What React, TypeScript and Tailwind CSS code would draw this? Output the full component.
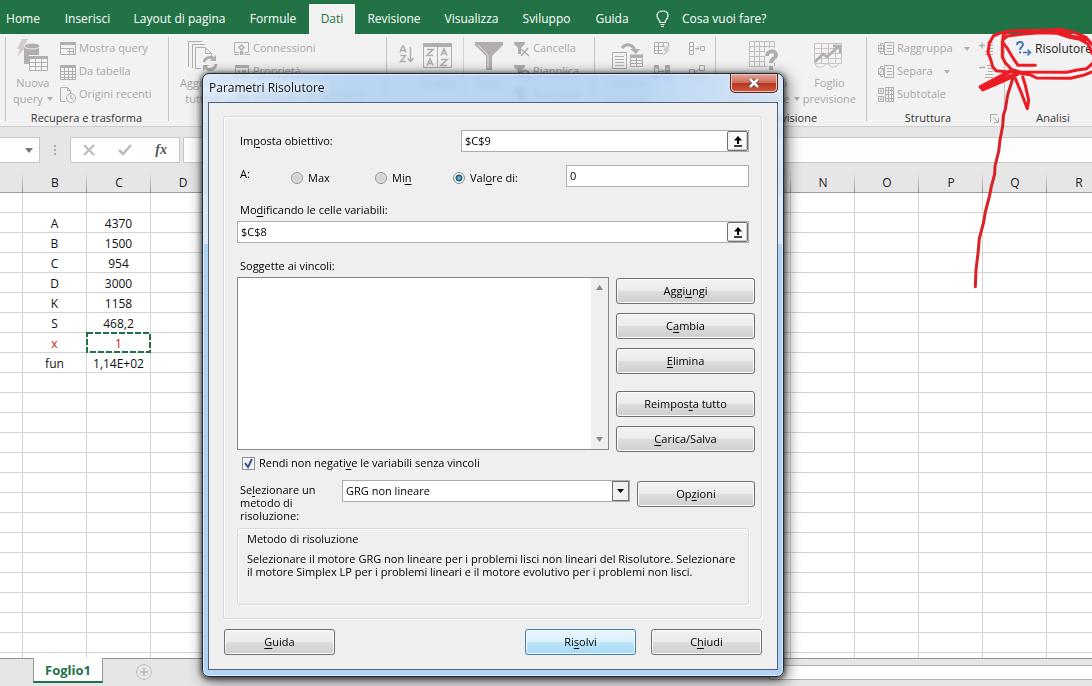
import { useState } from 'react'
import type { ReactNode } from 'react'
import clsx from 'clsx'

const tabs = [
  { label: 'Home', width: 'w-[60px]' },
  { label: 'Inserisci', width: 'w-[69px]' },
  { label: 'Layout di pagina', width: 'w-[115px]' },
  { label: 'Formule', width: 'w-[72px]' },
  { label: 'Dati', width: 'w-[46px]' },
  { label: 'Revisione', width: 'w-[78px]' },
  { label: 'Visualizza', width: 'w-[77px]' },
  { label: 'Sviluppo', width: 'w-[73px]' },
  { label: 'Guida', width: 'w-[58px]' },
]

const columns = ['A', 'B', 'C', 'D', 'E', 'F', 'G', 'H', 'I', 'J', 'K', 'L', 'M', 'N', 'O', 'P', 'Q', 'R']

const cells: Record<number, [string, string]> = {
  2: ['A', '4370'],
  3: ['B', '1500'],
  4: ['C', '954'],
  5: ['D', '3000'],
  6: ['K', '1158'],
  7: ['S', '468,2'],
  8: ['x', '1'],
  9: ['fun', '1,14E+02'],
}

const rows = Array.from({ length: 24 }, (_, i) => i + 1)

/* "Im&posta" underlines the letter after the ampersand */
function Mnemonic({ text }: { text: string }) {
  const i = text.indexOf('&')
  if (i < 0) return <>{text}</>
  return (
    <span>
      {text.slice(0, i)}
      <span className="underline underline-offset-2">{text[i + 1]}</span>
      {text.slice(i + 2)}
    </span>
  )
}

function Icon({ w = 16, h = 16, children }: { w?: number; h?: number; children: ReactNode }) {
  return (
    <svg width={w} height={h} viewBox={`0 0 ${w} ${h}`} fill="none" stroke="#b1aeae" className="shrink-0" aria-hidden="true">
      {children}
    </svg>
  )
}

const NewQueryIcon = () => (
  <Icon w={34} h={34}>
    <path d="M6 0h6L8 7h3L1 18l3-8H1z" fill="#cfcccc" stroke="none" />
    <path d="M8 7v18h5V16h10V7z" fill="#b1aeae" stroke="none" />
    <ellipse cx="16" cy="7" rx="8" ry="3" fill="#b1aeae" stroke="#f2f1f1" />
    <path d="M13.5 17.5h18v14h-18z" fill="#f8f7f7" />
    <path d="M13 18.500h19" strokeWidth="3" />
    <path d="M13.500 23.500h18M13.500 27.500h18M19.500 18v13M25.500 18v13" />
  </Icon>
)

const ShowQueryIcon = () => (
  <Icon>
    <path d="M.5 1.500h15v12H.5z" />
    <path d="M0 2.500h16" strokeWidth="3" />
    <path d="M.5 7.500h5M5.500 7.500h8v6M9.500 7v6M7 10.500h6" />
  </Icon>
)

const TableIcon = () => (
  <Icon>
    <path d="M.5 1.500h15v14H.5z" />
    <path d="M0 2.500h16" strokeWidth="3" />
    <path d="M0 7.500h16M0 10.500h16M0 13.500h16M4.500 3v12M8.500 3v12M12.500 3v12" />
  </Icon>
)

const RecentIcon = () => (
  <Icon>
    <path d="M6 14.500H.5v-14h7l3 3V7M7.500.5v3h3" />
    <circle cx="11" cy="11" r="4.500" />
    <path d="M11 8v3.500h2.500" />
  </Icon>
)

const RefreshIcon = () => (
  <Icon w={32} h={32}>
    <path d="M1.500 27V1.500H15M5.500 28V4.500H18M8.500 28.500v-21h10l6 6V17M18.500 7.500v6h6M8.500 28.500H14" />
    <path d="M17 22a6 6 0 0 1 10-3M29 24a6 6 0 0 1-10 4" strokeWidth="3" />
    <path d="M29 15v6h-6zM16 31v-6h6z" fill="#b1aeae" stroke="none" />
  </Icon>
)

const ConnectionIcon = () => (
  <Icon>
    <path d="M5 11.500H.5v-10h14v10H10M0 13.500h5M10 13.500h6" />
    <path d="M7.500 4l2.500 2.500L7.500 9 5 6.500z" strokeWidth="1.500" />
    <path d="M7.500 10v4" strokeWidth="3" />
  </Icon>
)

const PropertyIcon = () => (
  <Icon>
    <path d="M1.500 1.500h13v12h-13z" />
    <path d="M1 2.500h14" strokeWidth="3" />
    <path d="M4 7.500h2M8 7.500h4M4 10.500h2M8 10.500h4" strokeWidth="2" />
  </Icon>
)

const SortAscIcon = () => (
  <Icon w={16} h={20}>
    <path d="M1 7.500 3.500 1h1L7 7.500M2 5.500h4M1.500 10.500h5l-5 6h5.500" strokeWidth="1.500" />
    <path d="M11.500 2v14M8.500 13l3 3.500 3-3.500" strokeWidth="1.500" />
  </Icon>
)

const SortIcon = () => (
  <Icon w={30} h={26}>
    <path d="M.5 1.500h28v23H.5zM14.500 1v24" />
    <path d="M0 2h29" strokeWidth="4" />
    <path d="M4 6.500h6l-6 6h6M4 22.500 7 16l3 6.500M5 20.500h4M18 12.500 21 6l3 6.500M19 10.500h4M18 16.500h6l-6 6h6" strokeWidth="1.700" />
  </Icon>
)

const FunnelIcon = () => (
  <Icon w={28} h={28}>
    <path d="M0 0h28v3L17 14v14h-6V14L0 3z" fill="#b1aeae" stroke="none" />
    <path d="M3 3l10 10v13" stroke="#e4e2e2" />
  </Icon>
)

const ClearFilterIcon = () => (
  <Icon>
    <path d="M0 1h11v2L7 7v6H4V7L0 3z" fill="#b1aeae" stroke="none" />
    <path d="M7 8l8 7M14 7l-7 8" strokeWidth="1.500" />
  </Icon>
)

const ReapplyIcon = () => (
  <Icon>
    <path d="M0 1h11v2L7 7v6H4V7L0 3z" fill="#b1aeae" stroke="none" />
    <path d="M7 10a4 4 0 1 1 2 4" strokeWidth="2" />
  </Icon>
)

const TextColumnsIcon = () => (
  <Icon w={31} h={27}>
    <path d="M.5 9.500h14v16H.5zM3 13.500h9M3 16.500h9M3 19.500h9M3 22.500h9M18.500 14.500h12v9h-12zM18.500 17.500h12M18.500 20.500h12M24.500 14v10" />
    <path d="M18 13h13" strokeWidth="3" />
    <path d="M10 5c4-5 11-4 13 3" strokeWidth="3" />
    <path d="M18 6h10l-4 5z" fill="#b1aeae" stroke="none" />
  </Icon>
)

const FlashFillIcon = () => (
  <Icon>
    <path d="M9 12.500H.5v-11h14v4M0 5.500h11M0 9.500h8M4.500 1v12M9.500 1v5" />
    <path d="M12 5h4l-2 4h2l-7 6 2-5H9z" fill="#d0cdcd" stroke="none" />
  </Icon>
)

const DuplicatesIcon = () => (
  <Icon>
    <path d="M.5 1.500h4v13h-4zM11.500 1.500h4v13h-4zM5 7.500h5M8 5.500l2 2-2 2" />
    <path d="M0 3h5M0 10h5M11 3h5M11 7h5" strokeWidth="3" />
  </Icon>
)

const ConsolidateIcon = () => (
  <Icon>
    <path d="M.5 1.500h4v12h-4zM.5 5.500h4M.5 9.500h4M6 7.500h4M8 5.500l2 2-2 2M11.500 5.500h4v4h-4z" />
  </Icon>
)

const RelationIcon = () => (
  <Icon>
    <path d="M.5 5.500h5v7h-5zM10.500 1.500h5v5h-5zM10.500 10.500h5v4h-5zM3 11l7-6" />
  </Icon>
)

const WhatIfIcon = () => (
  <Icon w={30} h={30}>
    <path d="M.5.5h25v25H.5zM.5 5.500h25M.5 10.500h25M.5 15.500h16M.5 20.500h16M5.500.5v25M10.500.5v25M15.500.5v25M20.500.5v10" stroke="#c0bdbd" />
    <path d="M18 15c0-6 9-6 9-1 0 4-5 3-5 8M22 25v4" stroke="#f3f2f2" strokeWidth="7" />
    <path d="M18 15c0-6 9-6 9-1 0 4-5 3-5 8M22 25v4" strokeWidth="4" />
  </Icon>
)

const ForecastIcon = () => (
  <Icon w={30} h={26}>
    <path d="M.5.5h27v20H.5zM.5 5.500h27M.5 10.500h27M.5 15.500h27M7.500.5v20M14.500.5v20M21.500.5v20M1 21l2 3h6l3-3h3l2 3h5l2-3" stroke="#c7c4c4" />
    <path d="M1 19l8-8 4 3L25 3" strokeWidth="2.500" />
    <path d="M19 3h7v7" strokeWidth="2.500" />
  </Icon>
)

function OutlineIcon({ sign }: { sign: string }) {
  return (
    <Icon>
      <path d="M6.500 1.500h9v12h-9zM9 4.500h5M9 7.500h5M9 10.500h5M5 2.500H2.500V4M5 12.500H2.500V11M.5 4.500h5v6h-5z" />
      <path d={sign} />
    </Icon>
  )
}

const SubtotalIcon = () => (
  <Icon>
    <path d="M.5 1.500h5v5h-5zM.5 9.500h5v5h-5zM1.500 4h3M3 2.500v3M1.500 12h3M3 10.500v3" />
    <path d="M7.500.5h8v14h-8zM7 3.500h9M7 7.500h9M7 11.500h9M10.500 0v15M13.500 0v15" />
  </Icon>
)

function DetailIcon({ plus }: { plus?: boolean }) {
  return (
    <Icon>
      <path d={plus ? 'M0 4.500h6M3 1.500v6' : 'M0 3.500h6'} strokeWidth="1.500" />
      <path d="M8 1.500h6M9 4.500h5M9 7.500h5M6 10.500h8M6 13.500h8" />
    </Icon>
  )
}

function Caret() {
  return (
    <svg width="6" height="4" viewBox="0 0 6 4" className="shrink-0 fill-[#b1aeae]" aria-hidden="true">
      <path d="M0 0h6L3 4z" />
    </svg>
  )
}

function SmallCommand({ icon, label, caret }: { icon: ReactNode; label: string; caret?: boolean }) {
  return (
    <button type="button" className="flex h-[23px] items-center gap-[3px] whitespace-nowrap">
      {icon}
      {label}
      {caret && <span className="pl-2"><Caret /></span>}
    </button>
  )
}

function BigCommand({ icon, lines, caret }: { icon: ReactNode; lines: [string, string]; caret?: boolean }) {
  return (
    <button type="button" className="flex flex-col items-center leading-4 whitespace-nowrap">
      <span className="flex h-[38px] items-center">{icon}</span>
      <span>{lines[0]}</span>
      <span className="flex items-center gap-1">
        {lines[1]}
        {caret && <Caret />}
      </span>
    </button>
  )
}

function Group({ label, className, inner, launcher, children }: { label: string; className: string; inner: string; launcher?: boolean; children: ReactNode }) {
  return (
    <section
      aria-label={label}
      className={clsx('mt-[3px] flex shrink-0 flex-col bg-[linear-gradient(#c6c4c4,#c6c4c4)] bg-[length:1px_84px] bg-no-repeat', className)}
    >
      <div className={clsx('flex flex-1 items-start text-[#aaa7a7]', inner)}>{children}</div>
      <div className="flex h-4 items-center">
        <h2 className="flex-1 text-center text-[11px] text-[#333]">{label}</h2>
        {launcher && (
          <svg width="9" height="9" viewBox="0 0 9 9" fill="none" stroke="#aaa" className="mr-[5px] shrink-0" aria-hidden="true">
            <path d="M.5 8V.5H8M3 3l5 5M8.500 4v4.500H4" />
          </svg>
        )}
      </div>
    </section>
  )
}

function Ribbon() {
  return (
    <div className="flex h-[93px] shrink-0 overflow-hidden border-b border-[#cfcdcd] bg-[#f3f2f2] pl-[5px] text-[11px]">
      <Group label="Recupera e trasforma" className="w-[163px]" inner="pl-2">
        <div className="w-[47px]">
          <BigCommand icon={<NewQueryIcon />} lines={['Nuova', 'query']} caret />
        </div>
        <div>
          <SmallCommand icon={<ShowQueryIcon />} label="Mostra query" />
          <SmallCommand icon={<TableIcon />} label="Da tabella" />
          <SmallCommand icon={<RecentIcon />} label="Origini recenti" />
        </div>
      </Group>
      <Group label="Connessioni" className="w-[218px]" inner="pl-3">
        <div className="w-[54px]">
          <BigCommand icon={<RefreshIcon />} lines={['Aggiorna', 'tutto']} caret />
        </div>
        <div>
          <SmallCommand icon={<ConnectionIcon />} label="Connessioni" />
          <SmallCommand icon={<PropertyIcon />} label="Proprietà" />
          <SmallCommand icon={<ConnectionIcon />} label="Modifica collegamenti" />
        </div>
      </Group>
      <Group label="Ordina e filtra" className="w-[208px]" inner="pl-[13px]">
        <button type="button" aria-label="Ordina dalla A alla Z" className="pt-2"><SortAscIcon /></button>
        <div className="ml-2 flex h-16 w-[41px] border-r border-[#d5d3d3] pr-[10px]">
          <div className="flex w-[30px] justify-center">
            <BigCommand icon={<SortIcon />} lines={['Ordina', '']} />
          </div>
        </div>
        <div className="mx-[11px]">
          <BigCommand icon={<FunnelIcon />} lines={['Filtro', '']} />
        </div>
        <div>
          <SmallCommand icon={<ClearFilterIcon />} label="Cancella" />
          <SmallCommand icon={<ReapplyIcon />} label="Riapplica" />
          <SmallCommand icon={<ClearFilterIcon />} label="Avanzate" />
        </div>
      </Group>
      <Group label="Strumenti dati" className="w-[121px]" inner="gap-[11px] pl-[18px]">
        <div className="flex w-[31px] justify-center">
          <BigCommand icon={<TextColumnsIcon />} lines={['Testo in', 'colonne']} />
        </div>
        <div className="grid grid-cols-2 gap-x-[19px]">
          <SmallCommand icon={<FlashFillIcon />} label="" />
          <SmallCommand icon={<ConsolidateIcon />} label="" />
          <SmallCommand icon={<DuplicatesIcon />} label="" />
          <SmallCommand icon={<RelationIcon />} label="" />
        </div>
      </Group>
      <Group label="Previsione" className="w-[151px]" inner="justify-end gap-[3px] pr-[10px]">
        <BigCommand icon={<WhatIfIcon />} lines={['Analisi di', 'simulazione']} caret />
        <BigCommand icon={<ForecastIcon />} lines={['Foglio', 'previsione']} />
      </Group>
      <Group label="Struttura" className="w-[138px]" inner="pl-3" launcher>
        <div className="w-[101px]">
          <SmallCommand icon={<OutlineIcon sign="M1 7.500h4M3 5.500v4" />} label="Raggruppa" caret />
          <SmallCommand icon={<OutlineIcon sign="M1 10l4-5" />} label="Separa" caret />
          <SmallCommand icon={<SubtotalIcon />} label="Subtotale" />
        </div>
        <div>
          <SmallCommand icon={<DetailIcon plus />} label="" />
          <SmallCommand icon={<DetailIcon />} label="" />
        </div>
      </Group>
      <Group label="Analisi" className="min-w-[98px]" inner="pl-3">
        <button type="button" className="flex h-[23px] items-center gap-[3px] text-xs text-[#222]">
          <svg width="16" height="16" viewBox="0 0 16 16" fill="none" stroke="#4678b2" strokeWidth="2" aria-hidden="true">
            <path d="M1 4c0-4 6-4 6-.5C7 6 4 6 4 9M4 10.500v2" />
            <path d="M7 11.500h7M11.500 8.500l3 3-3 3" strokeWidth="1.500" />
          </svg>
          Risolutore
        </button>
      </Group>
    </div>
  )
}

function FormulaBar() {
  return (
    <div className="flex h-9 shrink-0 items-end bg-[#e6e6e6]">
      <div className="flex h-[26px] w-10 items-center justify-end border border-l-0 border-[#c6c6c6] bg-white pr-1.5">
        <svg width="8" height="5" viewBox="0 0 8 5" className="fill-[#777]" aria-hidden="true"><path d="M0 0h8L4 5z" /></svg>
      </div>
      <svg width="30" height="26" viewBox="0 0 30 26" className="fill-[#aaa]" aria-hidden="true">
        <path d="M14 8h2v2h-2zM14 12h2v2h-2zM14 16h2v2h-2z" />
      </svg>
      <div className="flex h-[26px] w-[110px] items-center justify-between border border-[#c6c6c6] bg-white px-3">
        <button type="button" aria-label="Annulla">
          <svg width="12" height="12" viewBox="0 0 12 12" stroke="#bbb" strokeWidth="2"><path d="M1 1l10 10M11 1L1 11" /></svg>
        </button>
        <button type="button" aria-label="Invio">
          <svg width="14" height="12" viewBox="0 0 14 12" fill="none" stroke="#bbb" strokeWidth="2.500"><path d="M1 6l4 4 8-9" /></svg>
        </button>
        <button type="button" aria-label="Inserisci funzione" className="font-['Liberation_Serif',serif] text-sm font-bold text-[#555] italic">
          fx
        </button>
      </div>
      <input aria-label="Barra della formula" className="ml-[3px] h-[26px] min-w-0 flex-1 border border-r-0 border-[#c6c6c6] bg-[#fdfdfd] px-2 text-xs outline-none" />
    </div>
  )
}

function Sheet() {
  return (
    <div className="min-h-0 flex-1 overflow-hidden bg-white">
      <table className="w-[1111px] table-fixed border-separate border-spacing-0 text-center text-xs leading-4 text-[#111]">
        <colgroup>
          {columns.map((c) => <col key={c} className={c === 'A' ? 'w-[23px]' : 'w-16'} />)}
        </colgroup>
        <thead>
          <tr className="h-[30px]">
            {columns.map((c) => (
              <th
                key={c}
                scope="col"
                className="border-b border-[#9b9b9b] bg-[#e6e6e6] bg-[linear-gradient(#e6e6e6,#999)] bg-[length:1px_20px] bg-right-bottom bg-no-repeat p-0 pt-[10px] font-normal text-[#222]"
              >
                {c === 'A' ? '' : c}
              </th>
            ))}
          </tr>
        </thead>
        <tbody>
          {rows.map((r) => (
            <tr key={r} className={clsx('h-5', r === 8 && 'text-[#c22]')}>
              {columns.map((c) => (
                <td key={c} className="relative border-r border-b border-[#d4d4d4] p-0 pt-0.5">
                  {c === 'B' && cells[r]?.[0]}
                  {c === 'C' && cells[r]?.[1]}
                  {c === 'C' && r === 8 && (
                    <svg className="absolute -top-px -left-px" width="65" height="21" fill="none" stroke="#217346" strokeWidth="2" strokeDasharray="6 2" aria-hidden="true">
                      <rect x="1" y="1" width="63" height="19" />
                    </svg>
                  )}
                </td>
              ))}
            </tr>
          ))}
        </tbody>
      </table>
    </div>
  )
}

function SheetTabs() {
  return (
    <div className="flex h-7 shrink-0 items-start border-t border-[#979797] bg-[#e6e6e6] pl-[33px]">
      <button type="button" className="-mt-px flex h-[25px] w-[70px] items-center justify-center border-x border-b-2 border-x-[#979797] border-b-[#217346] bg-white pt-0.5 text-[13px] font-bold text-[#217346]">
        Foglio1
      </button>
      <button type="button" aria-label="Nuovo foglio" className="mt-1 ml-8">
        <svg width="18" height="18" viewBox="0 0 18 18" fill="none" stroke="#c0c0c0">
          <circle cx="9" cy="9" r="7.500" />
          <path d="M9 5v8M5 9h8" strokeWidth="2" />
        </svg>
      </button>
      <div className="mt-1.5 ml-auto h-[15px] w-[323px] border-y border-l border-[#b0b0b0] bg-white" />
    </div>
  )
}

function DialogButton({ text, primary, className }: { text: string; primary?: boolean; className: string }) {
  return (
    <button
      type="button"
      className={clsx(
        'h-[26px] rounded-[3px] border text-[11px] shadow-[inset_0_0_0_1px_#fbfbfb]',
        primary
          ? 'border-[#3c7fb1] bg-[linear-gradient(#eaf6fd,#d9f0fc_50%,#bee6fd_50%,#a7d9f5)]'
          : 'border-[#707070] bg-[linear-gradient(#f2f2f2,#ebebeb_50%,#dddddd_50%,#cfcfcf)]',
        className,
      )}
    >
      <Mnemonic text={text} />
    </button>
  )
}

function RefField({ id, value, className }: { id: string; value: string; className: string }) {
  return (
    <div className={clsx('flex h-[22px] border border-[#abadb3] bg-white', className)}>
      <input id={id} defaultValue={value} className="min-w-0 flex-1 px-[3px] outline-none" />
      <button type="button" aria-label="Comprimi finestra di dialogo" className="flex w-[21px] items-center justify-center rounded-[2px] border border-[#707070] bg-[#f8f8f8] shadow-[inset_-1px_-1px_0_#ccc]">
        <svg width="10" height="11" viewBox="0 0 10 11" stroke="#000" fill="none" aria-hidden="true">
          <path d="M5 8V2" strokeWidth="2" />
          <path d="M5 0l4 4.500H1z" fill="#000" stroke="none" />
          <path d="M1 10h8" strokeWidth="1.500" />
        </svg>
      </button>
    </div>
  )
}

const goals = [
  { id: 'max', label: 'Max', width: 'w-[84px]' },
  { id: 'min', label: 'Mi&n', width: 'w-[78px]' },
  { id: 'value', label: 'Val&ore di:', width: 'w-[113px]' },
]

function SolverDialog() {
  const [goal, setGoal] = useState('value')

  return (
    <div
      role="dialog"
      aria-labelledby="solver-title"
      className="absolute top-[73px] left-[202px] w-[582px] rounded-[7px] border border-[#1f2b38] bg-[linear-gradient(transparent_170px,#b2d2f4_170px),linear-gradient(90deg,#d3e4f7cc,#aacdf2cc_25%,#aacdf2cc_75%,#d3e4f7cc)] px-[5px] pb-1.5 text-[11px] leading-4 text-black shadow-[inset_0_0_0_1px_#dcecfc,0_1px_5px_1px_rgba(0,0,0,0.6),2px_3px_14px_2px_rgba(0,0,0,0.5)] backdrop-blur-[2px]"
    >
      <div className="flex h-7 items-start justify-between">
        <h1 id="solver-title" className="pt-1.5 pl-px text-xs leading-4 text-[#111] [text-shadow:0_0_8px_#fff,0_0_8px_#fff]">
          Parametri Risolutore
        </h1>
        <button
          type="button"
          aria-label="Chiudi finestra"
          className="flex h-[19px] w-12 items-center justify-center rounded-b-[5px] border border-t-0 border-[#5c2320] bg-[linear-gradient(#e3a99c,#cf6c5a_48%,#b43420_50%,#cf5a3c)] shadow-[inset_0_0_0_1px_#eec4bb]"
        >
          <svg width="12" height="10" viewBox="0 0 12 10" aria-hidden="true">
            <path d="M2 1l8 8M10 1L2 9" stroke="#5b3a3a" strokeWidth="4" />
            <path d="M2 1l8 8M10 1L2 9" stroke="#fff" strokeWidth="2.500" />
          </svg>
        </button>
      </div>

      <div className="border border-[#52657a] bg-[#efefef] pt-[13px] pr-[15px] pb-[14px] pl-[14px]">
        <div className="rounded-[3px] border border-[#d5dbe0] py-[13px] pr-1.5 pl-[13px] shadow-[inset_1px_1px_0_#fff,1px_1px_0_#fff]">
          <div className="flex items-center justify-between pr-1.5 pl-[3px]">
            <label htmlFor="objective"><Mnemonic text="Im&posta obiettivo:" /></label>
            <RefField id="objective" value="$C$9" className="w-[288px]" />
          </div>

          <div className="mt-[13px] flex items-center pr-1.5 pl-[3px]">
            <span className="w-[51px] pb-1">A:</span>
            {goals.map((g) => (
              <label key={g.id} className={clsx('flex items-center gap-[5px] pt-1', g.width)}>
                <input
                  type="radio"
                  name="goal"
                  checked={goal === g.id}
                  onChange={() => setGoal(g.id)}
                  className="size-3 appearance-none rounded-full border border-[#8e8f8f] bg-[radial-gradient(#d2d2d2_35%,#f6f6f6)] checked:bg-[radial-gradient(#7fd0ee_5%,#17506f_42%,#f4f4f4_55%)]"
                />
                <Mnemonic text={g.label} />
              </label>
            ))}
            <input aria-label="Valore di" defaultValue="0" className="h-[22px] min-w-0 flex-1 border border-[#abadb3] bg-white px-[3px] pb-0.5 outline-none" />
          </div>

          <div className="mt-[15px] flex flex-col gap-[3px] pr-1.5">
            <label htmlFor="variables" className="pl-[3px]"><Mnemonic text="Mo&dificando le celle variabili:" /></label>
            <RefField id="variables" value="$C$8" className="w-full" />
          </div>

          <label htmlFor="constraints" className="mt-[15px] block pl-[3px]">Soggette ai vincoli:</label>
          <div className="mt-[3px] flex items-start gap-[7px]">
            <div className="flex h-[173px] flex-1 border border-[#828790] bg-white">
              <select id="constraints" multiple className="min-w-0 flex-1 appearance-none outline-none" />
              <div className="flex w-[17px] flex-col items-center justify-between bg-[#efefef] py-[7px]" aria-hidden="true">
                <svg width="7" height="5" viewBox="0 0 7 5" className="fill-[#8a8a8a]"><path d="M3.500 0L7 5H0z" /></svg>
                <svg width="7" height="5" viewBox="0 0 7 5" className="fill-[#8a8a8a]"><path d="M0 0h7L3.500 5z" /></svg>
              </div>
            </div>
            <div className="flex w-[139px] flex-col gap-[9px] pt-px">
              <DialogButton text="Aggi&ungi" className="w-full" />
              <DialogButton text="C&ambia" className="w-full" />
              <DialogButton text="&Elimina" className="mb-2 w-full" />
              <DialogButton text="Reimpos&ta tutto" className="w-full" />
              <DialogButton text="&Carica/Salva" className="w-full" />
            </div>
          </div>

          <label className="mt-[3px] flex items-center gap-1 pl-[5px]">
            <span className="relative flex">
              <input type="checkbox" defaultChecked className="peer size-[13px] appearance-none border border-[#8e8f8f] bg-[#eef0f4] shadow-[inset_0_0_0_1px_#fff]" />
              <svg className="pointer-events-none absolute inset-0 hidden peer-checked:block" width="13" height="13" viewBox="0 0 13 13" fill="none" stroke="#3f5390" strokeWidth="2" aria-hidden="true">
                <path d="M3 6l3 4 4-8" />
              </svg>
            </span>
            <Mnemonic text="Rendi non negati&ve le variabili senza vincoli" />
          </label>

          <div className="mt-[9px] flex items-start">
            <label htmlFor="method" className="w-[105px] pt-[3px] pr-3 pl-[3px] leading-[13px]">
              <Mnemonic text="Se&lezionare un metodo di risoluzione:" />
            </label>
            <div className="relative flex-1">
              <select id="method" className="block h-[22px] w-full appearance-none border border-[#abadb3] bg-white px-[3px] outline-none">
                <option>GRG non lineare</option>
                <option>Simplex LP</option>
                <option>Evolutivo</option>
              </select>
              <span className="pointer-events-none absolute top-px right-px flex h-5 w-[17px] items-center justify-center border border-[#707070] bg-[#f0f0f0]" aria-hidden="true">
                <svg width="7" height="4" viewBox="0 0 7 4"><path d="M0 0h7L3.500 4z" /></svg>
              </span>
            </div>
            <DialogButton text="Op&zioni" className="mt-px ml-[7px] w-[118px]" />
          </div>

          <section className="mt-1.5 mr-1.5 h-[77px] rounded-[3px] border border-[#d5dbe0] px-[9px] pt-0.5 shadow-[inset_1px_1px_0_#fff,1px_1px_0_#fff]">
            <h2>Metodo di risoluzione</h2>
            <p className="mt-[5px] leading-[13px]">
              Selezionare il motore GRG non lineare per i problemi lisci non lineari del Risolutore. Selezionare
              <br />
              il motore Simplex LP per i problemi lineari e il motore evolutivo per i problemi non lisci.
            </p>
          </section>
        </div>

        <div className="mt-[10px] flex gap-[15px] pl-px">
          <DialogButton text="&Guida" className="mr-auto w-[111px]" />
          <DialogButton text="Ri&solvi" primary className="w-[111px]" />
          <DialogButton text="C&hiudi" className="w-[111px]" />
        </div>
      </div>
    </div>
  )
}

/* hand-drawn marker round the Risolutore command */
function Marker() {
  return (
    <svg
      className="pointer-events-none absolute top-5 left-[940px]"
      width="152"
      height="280"
      viewBox="0 0 456 840"
      fill="none"
      stroke="#ed1c24"
      strokeWidth="9"
      strokeLinecap="round"
      strokeLinejoin="round"
      aria-hidden="true"
    >
      <path d="M205 156L168 152L158 140L152 118L144 98L148 70L160 48L184 38L228 32L300 31L360 28L405 38L438 52L458 76" />
      <path d="M205 32L190 46L187 66L200 82L214 106L234 136L286 136" />
      <path d="M187 66L187 112L196 128L214 148L240 156L380 157L412 150L440 146L460 128" />
      <path d="M190 58L202 48L250 42L300 38L352 40L388 52L420 58L444 72L456 100" />
      <path d="M350 34L396 50L436 58" strokeWidth="12" />
      <path d="M240 160L270 164L290 174L392 175L430 166L460 154" />
      <path d="M122 201L214 152L232 162L180 186L128 208L150 194L212 168" strokeWidth="12" />
      <path d="M226 176L242 214L262 266L266 240L256 196L248 170" />
      <path d="M222 160L214 190L203 224L196 268L190 286L188 318L180 360L176 394L165 438L164 462L154 500L148 530L136 576L131 606L118 656L114 700L108 750L106 800" stroke="#d9212a" />
    </svg>
  )
}

export default function App() {
  return (
    <div className="relative flex h-screen flex-col overflow-hidden bg-[#e6e6e6] font-['Open_Sans','Noto_Sans',sans-serif]">
      <nav className="flex h-[34px] shrink-0 items-end bg-[#217346] text-xs text-white">
        <div className="-ml-[7px] flex shrink-0 items-end">
          {tabs.map((t) => (
            <a
              key={t.label}
              href="#"
              className={clsx(
                'flex h-[30px] items-center justify-center whitespace-nowrap',
                t.width,
                t.label === 'Dati' && 'bg-[#f3f2f2] text-[#217346]',
              )}
            >
              {t.label}
            </a>
          ))}
        </div>
        <button type="button" className="ml-[15px] flex h-[30px] items-center gap-[13px] whitespace-nowrap">
          <svg width="13" height="18" viewBox="0 0 13 18" fill="none" stroke="#fff" strokeWidth="1.200" aria-hidden="true">
            <path d="M4 12.500c0-3-3-3.500-3-7C1 2.500 3.500 1 6.500 1S12 2.500 12 5.500c0 3.500-3 4-3 7zM4.500 14.500h4M5 16.500h3" />
          </svg>
          Cosa vuoi fare?
        </button>
      </nav>
      <Ribbon />
      <FormulaBar />
      <Sheet />
      <SheetTabs />
      <SolverDialog />
      <Marker />
    </div>
  )
}
